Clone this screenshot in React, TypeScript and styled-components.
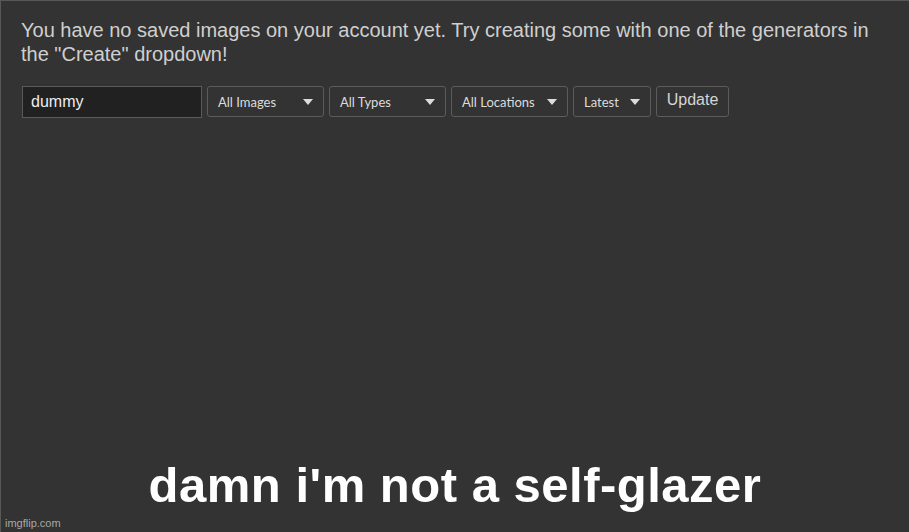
import React, { useState } from 'react';
import styled, { createGlobalStyle } from 'styled-components';

const GlobalStyle = createGlobalStyle`
  html, body {
    margin: 0;
    padding: 0;
    background: #333333;
  }
`;

const Frame = styled.div`
  position: relative;
  width: 909px;
  height: 532px;
  box-sizing: border-box;
  border-top: 1px solid #585858;
  border-left: 1px solid #585858;
  background: #333333;
  display: flex;
  flex-direction: column;
  padding: 17px 20px 0 20px;
  font-family: 'Liberation Sans', Arial, sans-serif;
  overflow: hidden;
`;

const Message = styled.p`
  margin: 0;
  max-width: 860px;
  font-size: 20px;
  line-height: 24px;
  color: #cfcfcf;
`;

const Controls = styled.div`
  display: flex;
  gap: 5px;
  margin-top: 20px;
  padding-left: 1px;
`;

const SearchInput = styled.input`
  box-sizing: border-box;
  width: 180px;
  height: 32px;
  padding: 0 8px;
  background: #212121;
  border: 1px solid #5a5a5a;
  color: #eeeeee;
  font-family: 'Liberation Sans', Arial, sans-serif;
  font-size: 16px;
  outline: none;
`;

const Dropdown = styled.div<{ $w: number }>`
  box-sizing: border-box;
  width: ${(p) => p.$w}px;
  height: 31px;
  padding: 0 10px;
  display: flex;
  align-items: center;
  justify-content: space-between;
  border: 1px solid #5c5c5c;
  border-radius: 3px;
  color: #dcdcdc;
  font-family: 'Comic Sans MS', 'Lato', sans-serif;
  font-size: 13px;
  cursor: pointer;
`;

const Caret = styled.span`
  width: 0;
  height: 0;
  border-left: 5px solid transparent;
  border-right: 5px solid transparent;
  border-top: 6px solid #dcdcdc;
`;

const UpdateButton = styled.button`
  box-sizing: border-box;
  width: 73px;
  height: 31px;
  background: transparent;
  border: 1px solid #5c5c5c;
  border-radius: 3px;
  color: #d6d6d6;
  font-family: 'Liberation Sans', Arial, sans-serif;
  font-size: 16px;
  padding: 0 0 4px;
  cursor: pointer;
`;

const Caption = styled.div`
  margin-top: auto;
  margin-bottom: 22px;
  text-align: center;
  color: #ffffff;
  font-weight: bold;
  font-size: 49px;
  line-height: 50px;
  letter-spacing: 0.5px;
`;

const Watermark = styled.span`
  position: absolute;
  left: 4px;
  bottom: 3px;
  font-size: 11px;
  color: #a8a8a8;
`;

const filters = [
  { label: 'All Images', width: 117 },
  { label: 'All Types', width: 117 },
  { label: 'All Locations', width: 117 },
  { label: 'Latest', width: 78 },
];

const App = () => {
  const [query, setQuery] = useState('dummy');

  return (
    <>
      <GlobalStyle />
      <Frame>
        <Message>
          You have no saved images on your account yet. Try creating some with one of the generators in
          the "Create" dropdown!
        </Message>
        <Controls>
          <SearchInput value={query} onChange={(e) => setQuery(e.target.value)} />
          {filters.map((f) => (
            <Dropdown key={f.label} $w={f.width}>
              {f.label}
              <Caret />
            </Dropdown>
          ))}
          <UpdateButton>Update</UpdateButton>
        </Controls>
        <Caption>damn i'm not a self-glazer</Caption>
        <Watermark>imgflip.com</Watermark>
      </Frame>
    </>
  );
};

export default App;
